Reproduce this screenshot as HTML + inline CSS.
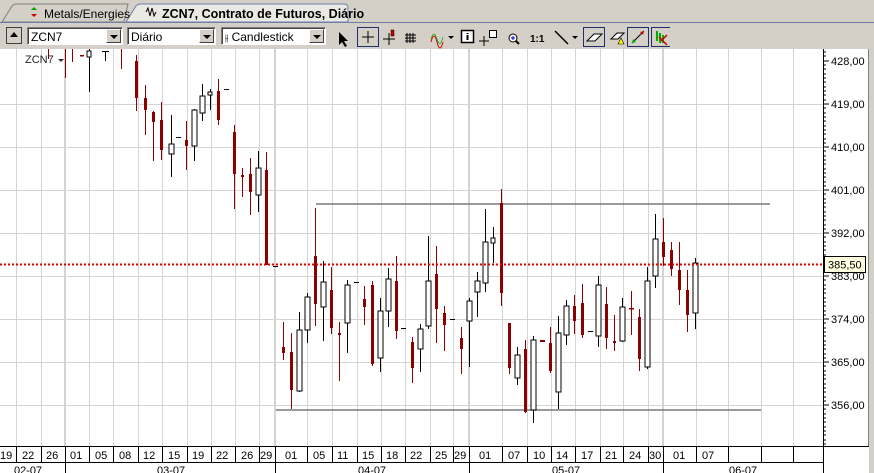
<!DOCTYPE html>
<html><head><meta charset="utf-8"><style>
body{margin:0;width:874px;height:473px;overflow:hidden;background:#d4d0c8;font-family:"Liberation Sans",sans-serif;position:relative}
.abs{position:absolute}
.combo{position:absolute;top:27px;height:18px;background:#fff;border:1px solid #808080;border-right-color:#fff;border-bottom-color:#fff;box-shadow:inset 1px 1px 0 #404040;font-size:12px;line-height:18px;padding-left:3px;box-sizing:border-box}
.combo .dd{position:absolute;right:1px;top:1px;width:15px;height:14px;background:#d4d0c8;border:1px solid #fff;border-right-color:#404040;border-bottom-color:#404040;box-sizing:border-box}
.combo .dd:after{content:"";position:absolute;left:3px;top:5px;border-left:4px solid transparent;border-right:4px solid transparent;border-top:4px solid #000}
</style></head><body>
<svg class="abs" style="left:0;top:0" width="874" height="24">
<rect x="0" y="0" width="874" height="24" fill="#d4d0c8"/>
<path d="M2 22 L12 6 Q14 4 17 4 L128 4 L124 22 Z" fill="#d4d0c8" stroke="#808080"/>
<path d="M126 22 L136 6 Q138 4 141 4 L344 4 Q348 4 348 8 L348 22 Z" fill="#ebe9e4" stroke="#6b7fa8"/>
<line x1="0" y1="22.5" x2="874" y2="22.5" stroke="#6b7fa8"/>
<path d="M31 10 l3 -3 l3 3 z" fill="#0a0"/><path d="M31 14 l3 3 l3 -3 z" fill="#c00"/>
<text x="44" y="18" font-size="12" fill="#000">Metals/Energies</text>
<path d="M146 12 l2 -4 l2 8 l2 -8 l2 8 l2 -4" fill="none" stroke="#000" stroke-width="1"/>
<text x="162" y="18" font-size="12.5" font-weight="bold" fill="#000">ZCN7, Contrato de Futuros, Diário</text>
</svg>
<div class="abs" style="left:6px;top:27px;width:16px;height:17px;border:1px solid #404040;box-sizing:border-box;background:#d4d0c8"><div style="position:absolute;left:3px;top:4px;border-left:4px solid transparent;border-right:4px solid transparent;border-bottom:5px solid #000"></div></div>
<div class="combo" style="left:27px;width:96px">ZCN7<div class="dd"></div></div>
<div class="combo" style="left:127px;width:89px">Diário<div class="dd"></div></div>
<div class="combo" style="left:221px;width:105px"><span style="font-size:10px">⫲</span> Candlestick<div class="dd"></div></div>
<svg class="abs" style="left:330px;top:25px" width="340" height="24">
<path d="M9 7 L9 20 L12 17 L15 22 L17 21 L14 16 L18 16 Z" fill="#000"/>
<rect x="27.5" y="2.5" width="21" height="19" fill="#d4d0c8" stroke="#1c2f6b"/>
<path d="M38 6v12M32 12h12" stroke="#000"/>
<path d="M59 8v12M53 14h12" stroke="#000"/><rect x="61" y="5" width="3" height="6" fill="#c00" stroke="#000" stroke-width=".5"/>
<path d="M77 8v10M80 8v10M83 8v10M75 10h11M75 13h11M75 16h11" stroke="#000"/>
<path d="M101 17 q3 -12 6 0 q3 12 6 0" fill="none" stroke="#c00"/><path d="M101 14 q3 -10 6 0 q3 10 6 -2" fill="none" stroke="#0a0" stroke-width=".7"/>
<path d="M118 11 l6 0 l-3 3z" fill="#000"/>
<rect x="131.5" y="5.5" width="12" height="12" fill="#fff" stroke="#000" stroke-width="1.5"/><path d="M137.5 8v1M137.5 10v5" stroke="#000" stroke-width="2"/>
<path d="M154 11v10M149 16h10" stroke="#000"/><rect x="159.5" y="5.5" width="7" height="7" fill="#fff" stroke="#000"/>
<circle cx="183" cy="13" r="4" fill="#fff" stroke="#000"/><path d="M186 16l3 3" stroke="#000" stroke-width="2"/><path d="M181 13h4M183 11v4" stroke="#00c"/>
<text x="200" y="17" font-size="10" font-weight="bold">1:1</text>
<path d="M225 6 L238 19" stroke="#000" stroke-width="1.5"/><path d="M242 11 l6 0 l-3 3z" fill="#000"/>
<rect x="253.5" y="2.5" width="21" height="19" fill="#d4d0c8" stroke="#1c2f6b"/>
<path d="M257 16 l7 -7 h8 l-7 7 z" fill="#fff" stroke="#000"/>
<path d="M281 14 l6 -6 h7 l-6 6 z" fill="#fff" stroke="#000"/><path d="M288 19 l3 -6 l3 6z" fill="#ff0" stroke="#000" stroke-width=".6"/>
<rect x="297.5" y="2.5" width="21" height="19" fill="#d4d0c8" stroke="#1c2f6b"/>
<path d="M302 18 L314 6" stroke="#000"/><path d="M302 18 l4 -1 l-3 -3z" fill="#0a0"/><path d="M314 6 l-4 1 l3 3z" fill="#c00"/>
<rect x="321.5" y="2.5" width="21" height="19" fill="#d4d0c8" stroke="#1c2f6b"/>
<path d="M327 6v10M330 8v10M333 10v8" stroke="#0a0" stroke-width="2"/><path d="M329 12l8 8M337 10l-6 6" stroke="#c00" stroke-width="1.5"/>
</svg>
<svg class="abs" style="left:0;top:49px" width="874" height="424">
<g transform="translate(0,-49)">
<rect x="0" y="49" width="869" height="424" fill="#fff"/>
<rect x="869" y="49" width="5" height="424" fill="#d4d0c8"/>
<line x1="868.5" y1="49" x2="868.5" y2="473" stroke="#808080"/>
<g stroke="#d4d4d4" stroke-width="1">
<path d="M16.5 49V446M41.5 49V446M89.5 49V446M113.5 49V446M138.5 49V446M162.5 49V446M187.5 49V446M211.5 49V446M235.5 49V446M259.5 49V446M307.5 49V446M332.5 49V446M357.5 49V446M381.5 49V446M405.5 49V446M430.5 49V446M453.5 49V446M502.5 49V446M527.5 49V446M551.5 49V446M575.5 49V446M600.5 49V446M623.5 49V446M648.5 49V446M696.5 49V446M728.5 49V446M761.5 49V446M793.5 49V446"/>
<path d="M0 104.5H823M0 147.5H823M0 190.5H823M0 233.5H823M0 276.5H823M0 319.5H823M0 362.5H823M0 405.5H823"/>
</g>
<g stroke="#d4d4d4" stroke-width="2"><path d="M65 49V446M275 49V446M469 49V446M663 49V446"/></g>
<g stroke="#7a7a7a" stroke-width="1.5"><path d="M316 204H770M276 410H761"/></g>
<g stroke="#8b0000" fill="#8b0000">
<path d="M48.5 49V59M65.5 49V78M72.5 49V62M121.5 49V69M136.5 55V111M145.5 85V135M153.5 111V161M161.5 102V160M186.5 121V170M218.5 79V125M234.5 125V209M242.5 168V197M250.5 158V215M266.5 152V265M283.5 322V360M291.5 333V409M315.5 208V326M331.5 267V334M339.5 322V381M364.5 286V325M372.5 281V366M396.5 256V339M412.5 337V383M436.5 246V343M444.5 306V351M461.5 327V374M501.5 189V306M509.5 323V374M525.5 340V413M550.5 327V373M574.5 295V334M582.5 284V338M606.5 287V349M614.5 315V351M631.5 291V335M639.5 309V371M663.5 218V266M671.5 242V276M679.5 242V305M687.5 270V332"/>
<g stroke="none">
<rect x="135" y="61" width="3" height="37"/><rect x="144" y="98" width="3" height="12"/><rect x="152" y="112" width="3" height="10"/><rect x="160" y="120" width="3" height="30"/><rect x="185" y="140" width="3" height="6"/><rect x="217" y="91" width="3" height="29"/><rect x="233" y="132" width="3" height="42"/><rect x="241" y="175" width="3" height="2"/><rect x="249" y="174" width="3" height="18"/><rect x="265" y="170" width="3" height="95"/>
<rect x="282" y="347" width="3" height="6"/><rect x="290" y="352" width="3" height="38"/><rect x="314" y="256" width="3" height="48"/><rect x="330" y="290" width="3" height="38"/><rect x="338" y="333" width="3" height="2"/><rect x="363" y="299" width="3" height="8"/><rect x="371" y="285" width="3" height="79"/><rect x="395" y="281" width="3" height="50"/><rect x="411" y="342" width="3" height="26"/><rect x="435" y="274" width="3" height="35"/><rect x="443" y="313" width="3" height="12"/><rect x="460" y="338" width="3" height="11"/><rect x="500" y="203" width="3" height="90"/><rect x="508" y="323" width="3" height="45"/><rect x="524" y="349" width="3" height="63"/><rect x="540" y="340" width="5" height="2"/><rect x="549" y="343" width="3" height="28"/><rect x="573" y="306" width="3" height="15"/><rect x="581" y="303" width="3" height="32"/><rect x="605" y="304" width="3" height="34"/><rect x="613" y="341" width="3" height="2"/><rect x="629" y="308" width="5" height="1.5"/><rect x="638" y="317" width="3" height="42"/><rect x="662" y="242" width="3" height="15"/><rect x="670" y="250" width="3" height="19"/><rect x="678" y="270" width="3" height="20"/><rect x="686" y="290" width="3" height="25"/><rect x="80" y="55" width="4" height="1.5"/>
</g></g>
<g stroke="#000" fill="#fff" stroke-width="1">
<path d="M89.5 49V92M105.5 51V61M102 51.5H109M171.5 115V177M194.5 109V161M202.5 84V121M210.5 89V110M258.5 151V212M299.5 312V392M307.5 293V343M323.5 261V341M347.5 280V353M380.5 298V372M388.5 268V327M420.5 324V372M428.5 236V329M469.5 298V367M477.5 272V317M485.5 209V292M493.5 227V263M517.5 347V385M533.5 336V423M558.5 316V409M566.5 300V345M598.5 276V347M622.5 298V342M647.5 267V369M655.5 214V288M695.5 258V329"/>
<path d="M176 137.5H181M224 89.5H229M354 282.5H359M401 328.5H406M450 319.5H455M588 331.5H593M273 266.5H278" />
<rect x="169" y="144" width="5" height="10"/><rect x="192" y="110" width="5" height="36"/><rect x="200" y="96" width="5" height="17"/><rect x="208" y="92" width="4" height="3"/><rect x="256" y="168" width="5" height="27"/><rect x="87" y="51" width="4" height="6"/>
<rect x="297" y="330" width="5" height="61"/><rect x="305" y="297" width="5" height="33"/><rect x="321" y="282" width="5" height="25"/><rect x="345" y="285" width="5" height="38"/><rect x="378" y="311" width="5" height="47"/><rect x="386" y="279" width="5" height="32"/><rect x="418" y="329" width="5" height="20"/><rect x="426" y="281" width="5" height="45"/><rect x="467" y="301" width="5" height="20"/><rect x="475" y="281" width="5" height="11"/><rect x="483" y="242" width="5" height="41"/><rect x="491" y="238" width="4" height="5"/><rect x="515" y="355" width="5" height="23"/><rect x="531" y="340" width="5" height="70"/><rect x="556" y="333" width="5" height="59"/><rect x="564" y="306" width="5" height="29"/><rect x="596" y="285" width="5" height="51"/><rect x="620" y="307" width="5" height="34"/><rect x="645" y="281" width="5" height="86"/><rect x="653" y="239" width="5" height="37"/><rect x="693" y="263" width="5" height="50"/>
</g>
<line x1="0" y1="264.5" x2="823" y2="264.5" stroke="#e00000" stroke-width="2" stroke-dasharray="2,2"/>
<line x1="823.5" y1="49" x2="823.5" y2="473" stroke="#000"/>
<g stroke="#000"><path d="M823 52h3M823 56h3M823 61h6M823 65h3M823 69h3M823 74h3M823 78h3M823 82h3M823 87h3M823 91h3M823 95h3M823 100h3M823 104h6M823 108h3M823 113h3M823 117h3M823 121h3M823 126h3M823 130h3M823 134h3M823 139h3M823 143h3M823 147h6M823 151h3M823 156h3M823 160h3M823 164h3M823 169h3M823 173h3M823 177h3M823 182h3M823 186h3M823 190h6M823 194h3M823 199h3M823 203h3M823 207h3M823 212h3M823 216h3M823 220h3M823 225h3M823 229h3M823 233h6M823 237h3M823 242h3M823 246h3M823 250h3M823 255h3M823 259h3M823 263h3M823 268h3M823 272h3M823 276h6M823 280h3M823 285h3M823 289h3M823 293h3M823 298h3M823 302h3M823 306h3M823 311h3M823 315h3M823 319h6M823 323h3M823 328h3M823 332h3M823 336h3M823 341h3M823 345h3M823 349h3M823 354h3M823 358h3M823 362h6M823 366h3M823 371h3M823 375h3M823 379h3M823 384h3M823 388h3M823 392h3M823 397h3M823 401h3M823 405h6M823 409h3M823 414h3M823 418h3M823 422h3M823 427h3M823 431h3M823 435h3M823 440h3M823 444h3"/></g>
<g font-size="11" fill="#000">
<text x="831" y="65">428,00</text><text x="831" y="108">419,00</text><text x="831" y="151">410,00</text><text x="831" y="194">401,00</text><text x="831" y="237">392,00</text><text x="831" y="280">383,00</text><text x="831" y="323">374,00</text><text x="831" y="366">365,00</text><text x="831" y="409">356,00</text>
</g>
<rect x="824.5" y="256.5" width="41" height="16" fill="#ffffe1" stroke="#000"/>
<text x="828" y="268.5" font-size="11">385,50</text>
<text x="25" y="63" font-size="11" fill="#222">ZCN7</text><path d="M58 59h6l-3 3z" fill="#333"/>
<rect x="0" y="446" width="869" height="27" fill="#fff"/>
<line x1="0" y1="446.5" x2="869" y2="446.5" stroke="#000"/>
<line x1="0" y1="462.5" x2="823" y2="462.5" stroke="#000"/>
<line x1="823.5" y1="446" x2="823.5" y2="473" stroke="#000"/>
<g stroke="#000"><path d="M16.5 446V462M41.5 446V462M65.5 446V473M89.5 446V462M113.5 446V462M138.5 446V462M162.5 446V462M187.5 446V462M211.5 446V462M235.5 446V462M259.5 446V462M275.5 446V473M307.5 446V462M332.5 446V462M357.5 446V462M381.5 446V462M405.5 446V462M430.5 446V462M453.5 446V462M469.5 446V473M502.5 446V462M527.5 446V462M551.5 446V462M575.5 446V462M600.5 446V462M623.5 446V462M648.5 446V462M663.5 446V473M696.5 446V462M728.5 446V462M761.5 446V462M793.5 446V462"/></g>
<g font-size="11" fill="#000">
<text x="0" y="459">19</text><text x="22" y="459">22</text><text x="46" y="459">26</text><text x="70" y="459">01</text><text x="95" y="459">05</text><text x="119" y="459">08</text><text x="143" y="459">12</text><text x="168" y="459">15</text><text x="192" y="459">19</text><text x="216" y="459">22</text><text x="241" y="459">26</text><text x="260" y="459">29</text>
<text x="285" y="459">01</text><text x="313" y="459">05</text><text x="337" y="459">11</text><text x="362" y="459">15</text><text x="386" y="459">18</text><text x="410" y="459">22</text><text x="435" y="459">25</text><text x="454" y="459">29</text>
<text x="479" y="459">01</text><text x="508" y="459">07</text><text x="533" y="459">10</text><text x="556" y="459">14</text><text x="581" y="459">17</text><text x="605" y="459">21</text><text x="629" y="459">24</text><text x="649" y="459">30</text>
<text x="673" y="459">01</text><text x="702" y="459">07</text>
<text x="14" y="474">02-07</text><text x="157" y="474">03-07</text><text x="358" y="474">04-07</text><text x="552" y="474">05-07</text><text x="729" y="474">06-07</text>
</g>
</g>
</svg>
</body></html>
